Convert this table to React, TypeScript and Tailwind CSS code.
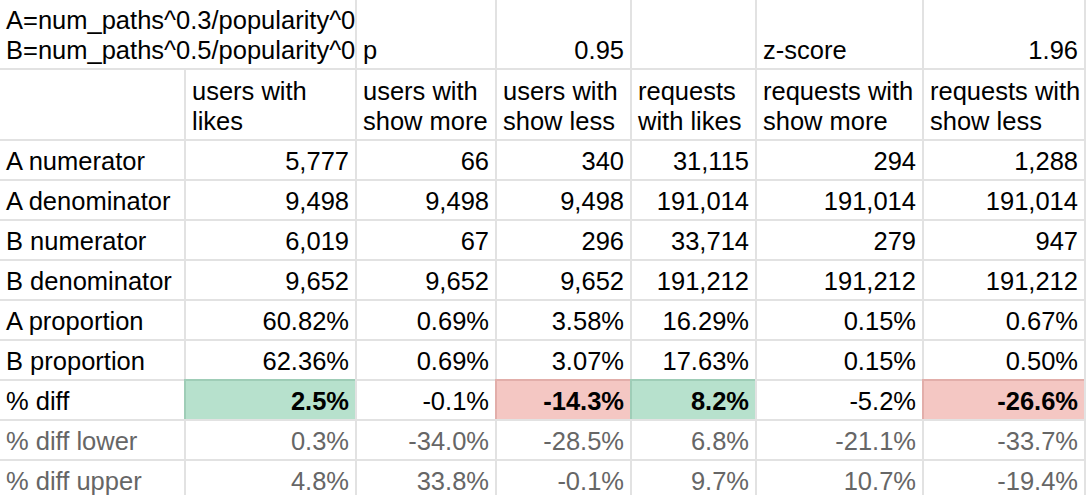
type Tone = "green" | "red" | null;

type Row = {
	label: string;
	values: string[];
	muted?: boolean;
	tones?: Tone[];
};

const rows: Row[] = [
	{ label: "A numerator", values: ["5,777", "66", "340", "31,115", "294", "1,288"] },
	{ label: "A denominator", values: ["9,498", "9,498", "9,498", "191,014", "191,014", "191,014"] },
	{ label: "B numerator", values: ["6,019", "67", "296", "33,714", "279", "947"] },
	{ label: "B denominator", values: ["9,652", "9,652", "9,652", "191,212", "191,212", "191,212"] },
	{ label: "A proportion", values: ["60.82%", "0.69%", "3.58%", "16.29%", "0.15%", "0.67%"] },
	{ label: "B proportion", values: ["62.36%", "0.69%", "3.07%", "17.63%", "0.15%", "0.50%"] },
	{
		label: "% diff",
		values: ["2.5%", "-0.1%", "-14.3%", "8.2%", "-5.2%", "-26.6%"],
		tones: ["green", null, "red", "green", null, "red"],
	},
	{ label: "% diff lower", values: ["0.3%", "-34.0%", "-28.5%", "6.8%", "-21.1%", "-33.7%"], muted: true },
	{ label: "% diff upper", values: ["4.8%", "33.8%", "-0.1%", "9.7%", "10.7%", "-19.4%"], muted: true },
];

const headers = [
	["users with", "likes"],
	["users with", "show more"],
	["users with", "show less"],
	["requests", "with likes"],
	["requests with", "show more"],
	["requests with", "show less"],
];

const cell = "flex items-end border-r-2 border-b-2 border-[#e2e2e2] px-[6px] pb-[3px] leading-[30px] whitespace-nowrap overflow-hidden";

const toneClass = (tone: Tone) => {
	if (tone === "green") return "bg-[#b7e1cd] border-[#9fcdb7] shadow-[-2px_-2px_0_0_#9fcdb7] font-bold";
	if (tone === "red") return "bg-[#f4c7c3] border-[#e2aeaa] shadow-[-2px_-2px_0_0_#e2aeaa] font-bold";
	return "";
};

export default function App() {
	return (
		<div className="w-[1086px] h-[495px] overflow-hidden bg-white text-black text-[25.5px] font-['Liberation_Sans',Arial,sans-serif]">
			<div className="grid grid-cols-[186px_171px_140px_135px_125px_167px_162px] grid-rows-[70px_71px_repeat(9,40px)]">
				{/* formula notes */}
				<div className={`${cell} col-span-2 flex-col items-start justify-end`}>
					<div>A=num_paths^0.3/popularity^0</div>
					<div>B=num_paths^0.5/popularity^0</div>
				</div>
				<div className={cell}>p</div>
				<div className={`${cell} justify-end`}>0.95</div>
				<div className={cell}></div>
				<div className={cell}>z-score</div>
				<div className={`${cell} justify-end`}>1.96</div>

				{/* header */}
				<div className={cell}></div>
				{headers.map((h, i) => (
					<div key={i} className={`${cell} flex-col items-start justify-end`}>
						<div>{h[0]}</div>
						<div>{h[1]}</div>
					</div>
				))}

				{rows.map(row => (
					<>
						<div key={row.label} className={`${cell} ${row.muted ? "text-[#666666]" : ""}`}>
							{row.label}
						</div>
						{row.values.map((v, i) => (
							<div
								key={row.label + i}
								className={`${cell} justify-end ${row.muted ? "text-[#666666]" : ""} ${toneClass(row.tones?.[i] ?? null)}`}>
								{v}
							</div>
						))}
					</>
				))}
			</div>
		</div>
	);
}
